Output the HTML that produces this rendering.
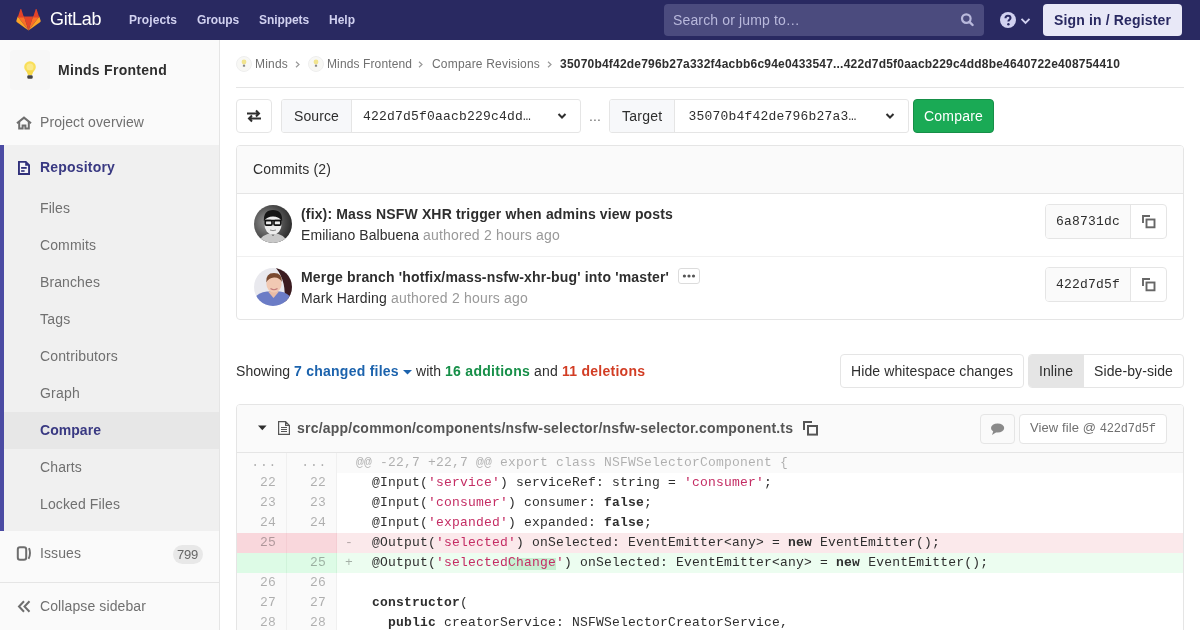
<!DOCTYPE html>
<html><head><meta charset="utf-8">
<style>
*{box-sizing:border-box;margin:0;padding:0}
html,body{width:1200px;height:630px;overflow:hidden;background:#fff;font-family:"Liberation Sans",sans-serif;color:#2e2e2e;font-size:14px}
.abs{position:absolute;white-space:pre}
.mono{font-family:"Liberation Mono",monospace}
.btn{position:absolute;border:1px solid #e5e5e5;border-radius:4px;background:#fff}
.igrp{position:absolute;border:1px solid #e5e5e5;border-radius:3px;background:#fff;overflow:hidden}
.ilab{position:absolute;left:0;top:0;height:32px;background:#f7f8fa;border-right:1px solid #e5e5e5}
.shag{position:absolute;left:1045px;width:122px;height:35px;border:1px solid #e5e5e5;border-radius:4px;background:#fff;overflow:hidden}
.shag i{position:absolute;left:0;top:0;width:85px;height:33px;background:#fafafa;border-right:1px solid #e5e5e5}
.dr{position:absolute;left:237px;width:946px;height:20px;font-family:"Liberation Mono",monospace;font-size:13px;letter-spacing:0.2px;line-height:20px;color:#2e2e2e;white-space:pre}
.dr .no,.dr .nn{position:absolute;top:0;width:50px;height:20px;background:#fafafa;border-right:1px solid #f0f0f0;color:rgba(0,0,0,0.3);text-align:right;padding-right:10px}
.dr .no{left:0}
.dr .nn{left:50px}
.dr .sg{position:absolute;left:108px;top:0;color:rgba(0,0,0,0.3)}
.dr .cd{position:absolute;left:119px;top:0}
.dr s{text-decoration:none;color:#c42d64}
.dr k{font-weight:bold}
.dr i{font-style:normal;background:linear-gradient(#ecfdf0 0 3px,#c7f0d2 3px 16px,#ecfdf0 16px)}
.dr.hunk{background:#fafafa}
.dr.hunk .cd{color:rgba(0,0,0,0.3)}
.dr.hunk .no,.dr.hunk .nn{padding-right:9px;letter-spacing:0.75px}
.dr.del{background:#fbe9eb}
.dr.del .no,.dr.del .nn{background:#f9d7dc;border-right-color:#f4cdd3}
.dr.add{background:#ecfdf0}
.dr.add .no,.dr.add .nn{background:#ddfbe6;border-right-color:#d0f3da}
</style></head><body><div id="wrap" style="position:absolute;left:0;top:0;width:1200px;height:630px;will-change:transform">
<div class="abs" style="left:0;top:0;width:1200px;height:40px;background:#292961"></div>
<svg class="abs" style="left:16px;top:9px" width="25" height="22" viewBox="0 0 25 22">
<path d="M12.5 21.5 L17 7.5 H8 Z" fill="#e24329"/>
<path d="M12.5 21.5 L8 7.5 H1.7 Z" fill="#fc6d26"/>
<path d="M1.7 7.5 L0.3 11.8 C0.2 12.2 0.3 12.6 0.7 12.9 L12.5 21.5 Z" fill="#fca326"/>
<path d="M1.7 8.5 H8 L5.3 0.2 C5.1 -0.2 4.5 -0.2 4.4 0.2 Z" fill="#e24329"/>
<path d="M12.5 21.5 L17 7.5 H23.3 Z" fill="#fc6d26"/>
<path d="M23.3 7.5 L24.7 11.8 C24.8 12.2 24.7 12.6 24.3 12.9 L12.5 21.5 Z" fill="#fca326"/>
<path d="M23.3 8.5 H17 L19.7 0.2 C19.9 -0.2 20.5 -0.2 20.6 0.2 Z" fill="#e24329"/>
</svg>
<div class="abs" style="left:50px;top:9px;font-size:18px;letter-spacing:-0.3px;color:#fff">GitLab</div>
<div class="abs" style="left:129px;top:12.5px;font-size:12px;font-weight:bold;letter-spacing:0.081px;color:#d1d1f0;">Projects</div>
<div class="abs" style="left:197px;top:12.5px;font-size:12px;font-weight:bold;letter-spacing:-0.111px;color:#d1d1f0;">Groups</div>
<div class="abs" style="left:259px;top:12.5px;font-size:12px;font-weight:bold;letter-spacing:-0.084px;color:#d1d1f0;">Snippets</div>
<div class="abs" style="left:329px;top:12.5px;font-size:12px;font-weight:bold;letter-spacing:-0.001px;color:#d1d1f0;">Help</div>
<div class="abs" style="left:664px;top:4px;width:320px;height:32px;border-radius:4px;background:#4b4b7e"></div>
<div class="abs" style="left:673px;top:12px;font-size:14px;letter-spacing:0.139px;color:#b9b9dc;">Search or jump to…</div>
<svg class="abs" style="left:960px;top:12px" width="16" height="16" viewBox="0 0 16 16"><circle cx="6.3" cy="6.6" r="4.3" stroke="#b9b9dc" stroke-width="2.2" fill="none"/><path d="M9.4 9.8l3.2 3.2" stroke="#b9b9dc" stroke-width="2.4" stroke-linecap="round"/></svg>
<svg class="abs" style="left:1000px;top:12px" width="16" height="16" viewBox="0 0 16 16"><circle cx="8" cy="8" r="8" fill="#d1d1f0"/><path d="M5.5 6.2c0-1.5 1.1-2.5 2.5-2.5s2.5 1 2.5 2.3c0 1.7-2.1 1.8-2.1 3.4" stroke="#292961" stroke-width="2.1" fill="none"/><circle cx="8.4" cy="12.2" r="1.2" fill="#292961"/></svg>
<svg class="abs" style="left:1020px;top:17px" width="11" height="8" viewBox="0 0 11 8"><path d="M1.5 1.8l4 4 4-4" stroke="#d1d1f0" stroke-width="1.9" fill="none"/></svg>
<div class="abs" style="left:1043px;top:4px;width:139px;height:32px;border-radius:4px;background:#e8e8f7"></div>
<div class="abs" style="left:1054px;top:11.5px;font-size:14px;font-weight:bold;letter-spacing:0.147px;color:#292961;">Sign in / Register</div>
<div class="abs" style="left:0;top:40px;width:220px;height:590px;background:#fafafa;border-right:1px solid #e5e5e5"></div>
<div class="abs" style="left:10px;top:50px;width:40px;height:40px;border-radius:4px;background:#f7f7f7"></div>
<svg class="abs" style="left:23px;top:61px" width="14" height="19" viewBox="0 0 14 19"><circle cx="7" cy="6" r="5.8" fill="#f9df5a"/><circle cx="7" cy="6" r="3.5" fill="#fbe98a"/><path d="M3.2 9.5 L5 14 H9 L10.8 9.5Z" fill="#f6d84a"/><rect x="4.3" y="14.3" width="5.4" height="3.4" rx="1.2" fill="#444"/></svg>
<div class="abs" style="left:58px;top:62px;font-size:14px;font-weight:bold;letter-spacing:0.287px;color:#2e2e2e;">Minds Frontend</div>
<div class="abs" style="left:40px;top:114px;font-size:14px;letter-spacing:0.081px;color:#707070;">Project overview</div>
<svg class="abs" style="left:16px;top:115.5px" width="16" height="14" viewBox="0 0 16 14"><path d="M1 7.2 L8 1.6 L15 7.2" stroke="#6e6e6e" stroke-width="2.1" fill="none"/><path d="M3.2 5.8 V12.6 H6.6 V9.4 H9.4 V12.6 H12.8 V5.8" stroke="#6e6e6e" stroke-width="2" fill="none"/></svg>
<div class="abs" style="left:0;top:145px;width:219px;height:386px;background:#f0f0f0;box-shadow:inset 4px 0 0 #4b4ba3"></div>
<div class="abs" style="left:40px;top:159px;font-size:14px;font-weight:bold;letter-spacing:0.188px;color:#393982;">Repository</div>
<svg class="abs" style="left:18px;top:161px" width="12" height="14" viewBox="0 0 12 14"><path d="M0 0.3 Q0 0 0.3 0 H8.2 L12 3.8 V13.7 Q12 14 11.7 14 H0.3 Q0 14 0 13.7Z" fill="#30307a"/><path d="M1.9 1.8 H7.2 V4.8 H10.1 V11.9 H1.9Z" fill="#f4f4f8"/><rect x="3.1" y="6" width="5.6" height="1.8" fill="#30307a"/><rect x="3.1" y="9.2" width="3.5" height="1.6" fill="#30307a"/></svg>
<div class="abs" style="left:4px;top:412px;width:215px;height:37px;background:#e7e7e7"></div>
<div class="abs" style="left:40px;top:200px;font-size:14px;letter-spacing:0.088px;color:#707070;">Files</div>
<div class="abs" style="left:40px;top:237px;font-size:14px;letter-spacing:0.111px;color:#707070;">Commits</div>
<div class="abs" style="left:40px;top:274px;font-size:14px;letter-spacing:0.107px;color:#707070;">Branches</div>
<div class="abs" style="left:40px;top:311px;font-size:14px;letter-spacing:0.219px;color:#707070;">Tags</div>
<div class="abs" style="left:40px;top:348px;font-size:14px;letter-spacing:0.145px;color:#707070;">Contributors</div>
<div class="abs" style="left:40px;top:385px;font-size:14px;letter-spacing:0.218px;color:#707070;">Graph</div>
<div class="abs" style="left:40px;top:422px;font-size:14px;font-weight:bold;letter-spacing:0.045px;color:#393982;">Compare</div>
<div class="abs" style="left:40px;top:459px;font-size:14px;letter-spacing:0.128px;color:#707070;">Charts</div>
<div class="abs" style="left:40px;top:496px;font-size:14px;letter-spacing:0.117px;color:#707070;">Locked Files</div>
<div class="abs" style="left:40px;top:545px;font-size:14px;letter-spacing:0.090px;color:#707070;">Issues</div>
<svg class="abs" style="left:16px;top:546px" width="16" height="15" viewBox="0 0 16 15"><rect x="1.8" y="1.2" width="8.4" height="12.6" rx="2.2" stroke="#6e6e6e" stroke-width="2" fill="none"/><path d="M13 2.2 Q15.2 7.5 12.6 12.8" stroke="#6e6e6e" stroke-width="1.9" fill="none"/></svg>
<div class="abs" style="left:173px;top:544.5px;width:30px;height:19px;border-radius:10px;background:#e8e8e8"></div>
<div class="abs" style="left:177px;top:546.5px;font-size:13px;letter-spacing:-0.230px;color:#666;">799</div>
<div class="abs" style="left:0;top:582px;width:219px;height:1px;background:#e5e5e5"></div>
<div class="abs" style="left:40px;top:598px;font-size:14px;letter-spacing:0.107px;color:#707070;">Collapse sidebar</div>
<svg class="abs" style="left:17px;top:600px" width="14" height="13" viewBox="0 0 14 13"><path d="M7 1.2 L2 6.5 L7 11.8 M12.5 1.2 L7.5 6.5 L12.5 11.8" stroke="#6e6e6e" stroke-width="2" fill="none"/></svg>
<div class="abs" style="left:236px;top:56px;width:16px;height:16px;border-radius:50%;background:#f8f8f5;border:1px solid #eeeeee"></div><svg class="abs" style="left:241px;top:59px" width="6" height="9" viewBox="0 0 6 9"><circle cx="3" cy="3" r="2.4" fill="#f1e48e"/><rect x="1.9" y="5.7" width="2.2" height="2" fill="#888"/></svg>
<div class="abs" style="left:255px;top:57px;font-size:12px;letter-spacing:0.198px;color:#707070;">Minds</div>
<svg class="abs" style="left:295px;top:61px" width="5" height="7" viewBox="0 0 5 7"><path d="M1 0.7 L4 3.5 L1 6.3" stroke="#999" stroke-width="1.2" fill="none"/></svg>
<div class="abs" style="left:308px;top:56px;width:16px;height:16px;border-radius:50%;background:#f8f8f5;border:1px solid #eeeeee"></div><svg class="abs" style="left:313px;top:59px" width="6" height="9" viewBox="0 0 6 9"><circle cx="3" cy="3" r="2.4" fill="#f1e48e"/><rect x="1.9" y="5.7" width="2.2" height="2" fill="#888"/></svg>
<div class="abs" style="left:327px;top:57px;font-size:12px;letter-spacing:0.116px;color:#707070;">Minds Frontend</div>
<svg class="abs" style="left:418px;top:61px" width="5" height="7" viewBox="0 0 5 7"><path d="M1 0.7 L4 3.5 L1 6.3" stroke="#999" stroke-width="1.2" fill="none"/></svg>
<div class="abs" style="left:432px;top:57px;font-size:12px;letter-spacing:0.194px;color:#707070;">Compare Revisions</div>
<svg class="abs" style="left:546.5px;top:61px" width="5" height="7" viewBox="0 0 5 7"><path d="M1 0.7 L4 3.5 L1 6.3" stroke="#999" stroke-width="1.2" fill="none"/></svg>
<div class="abs" style="left:560px;top:57px;font-size:12px;font-weight:bold;letter-spacing:0.204px;color:#2e2e2e;">35070b4f42de796b27a332f4acbb6c94e0433547...422d7d5f0aacb229c4dd8be4640722e408754410</div>
<div class="abs" style="left:236px;top:87px;width:948px;height:1px;background:#e5e5e5"></div>
<div class="btn" style="left:236px;top:99px;width:36px;height:34px"></div>
<svg class="abs" style="left:246px;top:109px" width="16" height="14" viewBox="0 0 16 14"><path d="M1 4.5h12M10 1.5l3 3-3 3M15 9.5H3M6 6.5l-3 3 3 3" stroke="#2e2e2e" stroke-width="2" fill="none"/></svg>
<div class="igrp" style="left:281px;top:99px;width:300px;height:34px"><div class="ilab" style="width:70px"></div></div>
<div class="abs" style="left:294px;top:108px;font-size:14px;letter-spacing:0.107px;color:#2e2e2e;">Source</div>
<div class="abs mono" style="left:363px;top:108.5px;font-size:13px;letter-spacing:0.2px;color:#2e2e2e">422d7d5f0aacb229c4dd…</div>
<svg class="abs" style="left:557px;top:112px" width="10" height="8" viewBox="0 0 10 8"><path d="M1.5 2l3.5 3.5 3.5-3.5" stroke="#2e2e2e" stroke-width="2" fill="none"/></svg>
<div class="abs" style="left:589px;top:108px;font-size:14px;letter-spacing:0.110px;color:#707070;">...</div>
<div class="igrp" style="left:609px;top:99px;width:300px;height:34px"><div class="ilab" style="width:65px"></div></div>
<div class="abs" style="left:622px;top:108px;font-size:14px;letter-spacing:0.256px;color:#2e2e2e;">Target</div>
<div class="abs mono" style="left:688.5px;top:108.5px;font-size:13px;letter-spacing:0.2px;color:#2e2e2e">35070b4f42de796b27a3…</div>
<svg class="abs" style="left:885px;top:112px" width="10" height="8" viewBox="0 0 10 8"><path d="M1.5 2l3.5 3.5 3.5-3.5" stroke="#2e2e2e" stroke-width="2" fill="none"/></svg>
<div class="abs" style="left:913px;top:99px;width:81px;height:34px;border-radius:4px;background:#1aaa55;border:1px solid #168f48"></div>
<div class="abs" style="left:924px;top:108px;font-size:14px;letter-spacing:0.203px;color:#fff;">Compare</div>
<div class="abs" style="left:236px;top:145px;width:948px;height:175px;border:1px solid #e5e5e5;border-radius:4px;overflow:hidden"><div class="abs" style="left:0;top:0;width:946px;height:48px;background:#fafafa;border-bottom:1px solid #e5e5e5"></div><div class="abs" style="left:0;top:110px;width:946px;height:1px;background:#f0f0f0"></div></div>
<div class="abs" style="left:253px;top:161px;font-size:14px;letter-spacing:0.162px;color:#2e2e2e;">Commits (2)</div>
<svg class="abs" style="left:254px;top:205px" width="38" height="38" viewBox="0 0 38 38"><defs><clipPath id="c1"><circle cx="19" cy="19" r="19"/></clipPath><radialGradient id="g1" cx="0.35" cy="0.45" r="0.75"><stop offset="0" stop-color="#9a9a9a"/><stop offset="0.6" stop-color="#4a4a4a"/><stop offset="1" stop-color="#1e1e1e"/></radialGradient></defs>
<g clip-path="url(#c1)"><rect width="38" height="38" fill="url(#g1)"/>
<path d="M4 38 Q7 29 19 28 Q31 29 34 38Z" fill="#c8c8c8"/>
<path d="M15 26 L19 31 L23 26Z" fill="#2a2a2a"/>
<ellipse cx="19" cy="19.5" rx="8.6" ry="10.2" fill="#ececec"/>
<path d="M9.8 16 Q9.5 5 19 5 Q28.5 5 28.2 16 Q25 11.5 19 11.5 Q13 11.5 9.8 16Z" fill="#151515"/>
<path d="M10.5 15.5 H27.5" stroke="#111" stroke-width="1.4"/>
<rect x="11.2" y="15.5" width="6.8" height="4.6" rx="1.2" stroke="#111" stroke-width="1.7" fill="none"/><rect x="20" y="15.5" width="6.8" height="4.6" rx="1.2" stroke="#111" stroke-width="1.7" fill="none"/>
<path d="M16 25 Q19 26.3 22 25" stroke="#888" stroke-width="1" fill="none"/>
</g></svg>
<div class="abs" style="left:301px;top:206px;font-size:14px;font-weight:bold;letter-spacing:0.156px;color:#2e2e2e;">(fix): Mass NSFW XHR trigger when admins view posts</div>
<div class="abs" style="left:301px;top:227px"><span style="font-size:14px;letter-spacing:0.076px;color:#2e2e2e;">Emiliano Balbuena </span><span style="font-size:14px;letter-spacing:0.195px;color:#999;">authored 2 hours ago</span></div>
<div class="shag" style="top:204px"><i></i></div>
<svg class="abs" style="left:1141px;top:214px" width="16" height="15" viewBox="0 0 16 15"><path d="M2 9 V2 H9" stroke="#666" stroke-width="1.9" fill="none"/><rect x="5.5" y="5.5" width="8" height="7.8" stroke="#666" stroke-width="1.9" fill="none"/></svg>
<div class="abs mono" style="left:1056px;top:213.5px;font-size:13px;letter-spacing:0.2px;color:#2e2e2e">6a8731dc</div>
<svg class="abs" style="left:254px;top:267.5px" width="38" height="38" viewBox="0 0 38 38"><defs><clipPath id="c2"><circle cx="19" cy="19" r="19"/></clipPath></defs>
<g clip-path="url(#c2)"><rect width="38" height="38" fill="#e9e9ee"/>
<path d="M22 0 H38 V34 L30 34 Q33 14 22 0Z" fill="#3b1c20"/>
<path d="M0 38 V31 Q4 24 13 23.5 H26 Q34 24.5 38 31 V38Z" fill="#6b7cc6"/>
<path d="M14 23.5 L19.5 30 L25 23.5Z" fill="#e8bca6"/>
<ellipse cx="20" cy="16" rx="7.6" ry="8.6" fill="#f1c9b3"/>
<path d="M12.2 14.5 Q11.5 5 20 5 Q28.5 5 27.8 14 Q25.5 9.2 20 9.5 Q14.5 9.8 12.2 14.5Z" fill="#7a4a30"/>
<path d="M16.5 20.5 Q20 23 23.5 20.5" stroke="#c27a7a" stroke-width="1.1" fill="none"/>
</g></svg>
<div class="abs" style="left:301px;top:269px;font-size:14px;font-weight:bold;letter-spacing:0.161px;color:#2e2e2e;">Merge branch &#x27;hotfix/mass-nsfw-xhr-bug&#x27; into &#x27;master&#x27;</div>
<div class="abs" style="left:678px;top:268px;width:22px;height:16px;border:1px solid #dcdcdc;border-radius:3px;background:#fff"></div>
<svg class="abs" style="left:682px;top:274px" width="14" height="4" viewBox="0 0 14 4"><circle cx="2.4" cy="2" r="1.6" fill="#555"/><circle cx="7" cy="2" r="1.6" fill="#555"/><circle cx="11.5" cy="2" r="1.6" fill="#555"/></svg>
<div class="abs" style="left:301px;top:290px"><span style="font-size:14px;letter-spacing:0.160px;color:#2e2e2e;">Mark Harding </span><span style="font-size:14px;letter-spacing:0.195px;color:#999;">authored 2 hours ago</span></div>
<div class="shag" style="top:267px"><i></i></div>
<svg class="abs" style="left:1141px;top:277px" width="16" height="15" viewBox="0 0 16 15"><path d="M2 9 V2 H9" stroke="#666" stroke-width="1.9" fill="none"/><rect x="5.5" y="5.5" width="8" height="7.8" stroke="#666" stroke-width="1.9" fill="none"/></svg>
<div class="abs mono" style="left:1056px;top:276.5px;font-size:13px;letter-spacing:0.2px;color:#2e2e2e">422d7d5f</div>
<div class="abs" style="left:236px;top:362.5px"><span style="font-size:14px;letter-spacing:0.051px;">Showing </span><span style="font-size:14px;font-weight:bold;letter-spacing:0.248px;color:#1c63ad;">7 changed files </span><svg width="9" height="10" viewBox="0 0 9 10"><path d="M0 4 H9 L4.5 8.5Z" fill="#1c63ad"/></svg><span style="font-size:14px;letter-spacing:0.054px;"> with </span><span style="font-size:14px;font-weight:bold;letter-spacing:0.276px;color:#168f48;">16 additions</span><span style="font-size:14px;letter-spacing:0.172px;"> and </span><span style="font-size:14px;font-weight:bold;letter-spacing:0.257px;color:#d23d24;">11 deletions</span></div>
<div class="btn" style="left:840px;top:354px;width:184px;height:34px"></div>
<div class="abs" style="left:851px;top:363px;font-size:14px;letter-spacing:0.107px;color:#2e2e2e;">Hide whitespace changes</div>
<div class="btn" style="left:1028px;top:354px;width:156px;height:34px;overflow:hidden"><div class="abs" style="left:0;top:0;width:55px;height:32px;background:#e5e5e5;border-right:1px solid #e5e5e5"></div></div>
<div class="abs" style="left:1039px;top:363px;font-size:14px;letter-spacing:0.089px;color:#2e2e2e;">Inline</div>
<div class="abs" style="left:1094px;top:363px;font-size:14px;letter-spacing:0.099px;color:#2e2e2e;">Side-by-side</div>
<div class="abs" style="left:236px;top:404px;width:948px;height:240px;border:1px solid #e5e5e5;border-radius:4px 4px 0 0;overflow:hidden"><div class="abs" style="left:0;top:0;width:946px;height:48px;background:#fafafa;border-bottom:1px solid #e5e5e5"></div></div>
<div class="abs" style="left:297px;top:420px;font-size:14px;font-weight:bold;letter-spacing:0.211px;color:#555;">src/app/common/components/nsfw-selector/nsfw-selector.component.ts</div>
<svg class="abs" style="left:258px;top:425px" width="9" height="6" viewBox="0 0 9 6"><path d="M0 0.6 H8.6 L4.3 5.2Z" fill="#2e2e2e"/></svg>
<svg class="abs" style="left:278px;top:421px" width="12" height="14" viewBox="0 0 12 14"><path d="M0.6 0.6 H7.6 L11.4 4.4 V13.4 H0.6Z M7.6 0.6 V4.4 H11.4" stroke="#555" stroke-width="1.2" fill="none"/><path d="M3 6.5 H9 M3 8.5 H9 M3 10.5 H9" stroke="#555" stroke-width="1"/></svg>
<svg class="abs" style="left:802px;top:420px" width="16" height="16" viewBox="0 0 16 16"><path d="M2 10 V2 H10" stroke="#555" stroke-width="2" fill="none"/><rect x="6" y="6" width="9" height="8.6" stroke="#555" stroke-width="2" fill="none"/></svg>
<div class="btn" style="left:980px;top:414px;width:35px;height:30px;background:#fafafa"></div>
<svg class="abs" style="left:990px;top:423px" width="15" height="13" viewBox="0 0 15 13"><ellipse cx="7.6" cy="5" rx="6.6" ry="4.6" fill="#8a8a8a"/><path d="M3.5 7.5 L2 12 L7 8.8Z" fill="#8a8a8a"/></svg>
<div class="btn" style="left:1019px;top:414px;width:148px;height:30px"></div>
<div class="abs" style="left:1030px;top:419px"><span style="font-size:13px;letter-spacing:0.098px;color:#707070;">View file @ </span><span class="mono" style="font-size:12px;letter-spacing:-0.2px;color:#707070">422d7d5f</span></div>
<div class="dr hunk" style="top:453px"><div class="no">...</div><div class="nn">...</div><div class="sg"></div><div class="cd">@@ -22,7 +22,7 @@ export class NSFWSelectorComponent {</div></div>
<div class="dr " style="top:473px"><div class="no">22</div><div class="nn">22</div><div class="sg"> </div><div class="cd">  @Input(<s>'service'</s>) serviceRef: string = <s>'consumer'</s>;</div></div>
<div class="dr " style="top:493px"><div class="no">23</div><div class="nn">23</div><div class="sg"> </div><div class="cd">  @Input(<s>'consumer'</s>) consumer: <k>false</k>;</div></div>
<div class="dr " style="top:513px"><div class="no">24</div><div class="nn">24</div><div class="sg"> </div><div class="cd">  @Input(<s>'expanded'</s>) expanded: <k>false</k>;</div></div>
<div class="dr del" style="top:533px"><div class="no">25</div><div class="nn"></div><div class="sg">-</div><div class="cd">  @Output(<s>'selected'</s>) onSelected: EventEmitter&lt;any&gt; = <k>new</k> EventEmitter();</div></div>
<div class="dr add" style="top:553px"><div class="no"></div><div class="nn">25</div><div class="sg">+</div><div class="cd">  @Output(<s>'selected<i>Change</i>'</s>) onSelected: EventEmitter&lt;any&gt; = <k>new</k> EventEmitter();</div></div>
<div class="dr " style="top:573px"><div class="no">26</div><div class="nn">26</div><div class="sg"> </div><div class="cd"></div></div>
<div class="dr " style="top:593px"><div class="no">27</div><div class="nn">27</div><div class="sg"> </div><div class="cd">  <k>constructor</k>(</div></div>
<div class="dr " style="top:613px"><div class="no">28</div><div class="nn">28</div><div class="sg"> </div><div class="cd">    <k>public</k> creatorService: NSFWSelectorCreatorService,</div></div>
</div></body></html>
